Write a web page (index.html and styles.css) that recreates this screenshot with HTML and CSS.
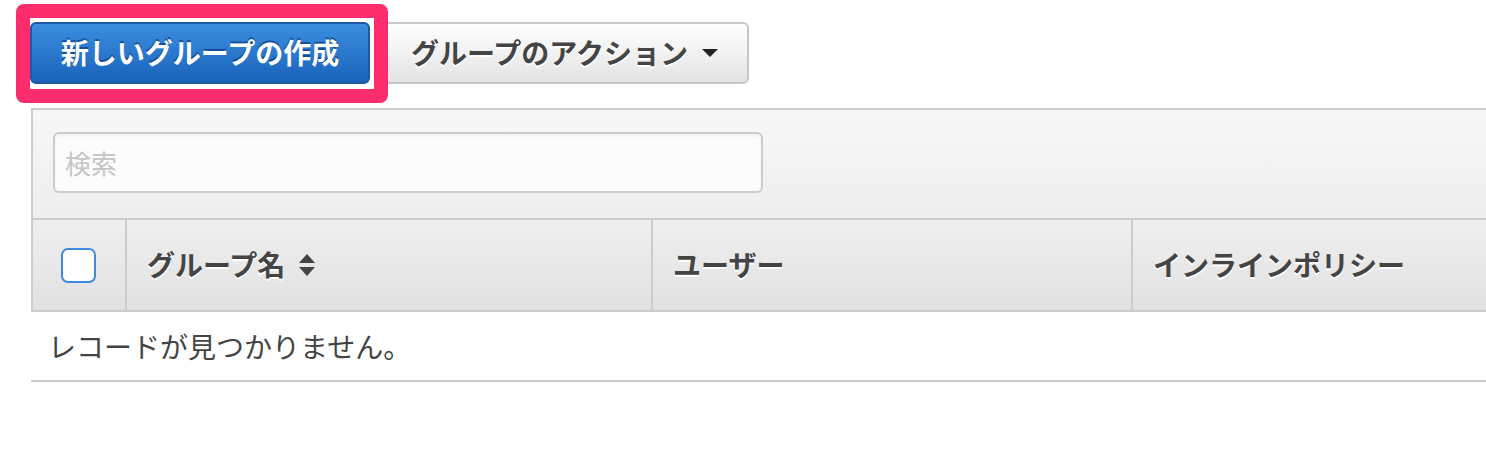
FILE: index.html
```html
<!DOCTYPE html>
<html lang="ja">
<head>
<meta charset="utf-8">
<title>グループ</title>
<link rel="stylesheet" href="styles.css">
</head>
<body>
<div class="page">
  <div class="toolbar">
    <div class="create-wrap">
      <button class="btn btn-primary">新しいグループの作成</button>
      <div class="highlight"></div>
    </div>
    <button class="btn btn-default">グループのアクション <span class="caret"></span></button>
  </div>
  <div class="panel">
    <div class="filter">
      <input class="search" type="text" placeholder="検索">
    </div>
    <div class="thead">
      <div class="th th-check"><span class="checkbox"></span></div>
      <div class="th th-name">グループ名 <span class="sort"><span class="up"></span><span class="down"></span></span></div>
      <div class="th th-users">ユーザー</div>
      <div class="th th-policy">インラインポリシー</div>
    </div>
    <div class="empty">レコードが見つかりません。</div>
  </div>
</div>
</body>
</html>
```
FILE: styles.css
```css
html, body {
  margin: 0;
  padding: 0;
  background: #ffffff;
  overflow: hidden;
}
body {
  font-family: "Noto Sans CJK JP", "Noto Sans", sans-serif;
  color: #444444;
}
.page {
  padding: 22px 0 0 30px;
}
.toolbar {
  display: flex;
  align-items: flex-start;
  gap: 10px;
}
.create-wrap {
  position: relative;
}
.btn {
  font-family: "Noto Sans CJK JP", "Noto Sans", sans-serif;
  font-size: 28px;
  font-weight: 700;
  height: 62px;
  border-radius: 6px;
  display: flex;
  align-items: center;
  justify-content: center;
  margin: 0;
  padding: 0 0 3px;
  cursor: pointer;
}
.btn-primary {
  width: 340px;
  color: #ffffff;
  background: linear-gradient(#3b8ee0, #1a63bb);
  border: 2px solid #1b58a8;
  text-shadow: 0 -2px 0 rgba(0, 40, 100, 0.55);
}
.btn-default {
  width: 369px;
  color: #444444;
  background: linear-gradient(#ffffff, #e3e3e3);
  border: 2px solid #c6c6c6;
  text-shadow: 0 2px 0 #ffffff;
  gap: 14px;
}
.caret {
  width: 0;
  height: 0;
  border-left: 8px solid transparent;
  border-right: 8px solid transparent;
  border-top: 8px solid #222222;
  margin-top: 3px;
}
.highlight {
  position: absolute;
  left: -14px;
  top: -18px;
  width: 344px;
  height: 71px;
  border: 14px solid #fd2d6d;
  border-radius: 8px;
  pointer-events: none;
}
.panel {
  margin-top: 24px;
  margin-left: 1px;
  margin-right: -20px;
}
.filter {
  border: 2px solid #cccccc;
  border-bottom: none;
  background: linear-gradient(#f7f7f7, #eeeeee);
  height: 110px;
  padding: 22px 20px 0;
  box-sizing: border-box;
}
.search {
  display: block;
  width: 710px;
  height: 61px;
  box-sizing: border-box;
  border: 2px solid #cccccc;
  border-radius: 6px;
  background: #fcfcfc;
  box-shadow: inset 0 2px 3px rgba(0, 0, 0, 0.05);
  padding: 0 10px;
  font-family: "Noto Sans CJK JP", "Noto Sans", sans-serif;
  font-size: 26px;
  color: #444444;
  margin: 0;
}
.search::placeholder {
  color: #c4c4c4;
}
.thead {
  display: grid;
  grid-template-columns: 92px 526px 480px 1fr;
  border: 2px solid #cccccc;
  background: linear-gradient(#efefef, #e1e1e1);
  height: 94px;
  box-sizing: border-box;
}
.th {
  display: flex;
  align-items: center;
  font-size: 28px;
  font-weight: 700;
  color: #444444;
  text-shadow: 0 2px 0 #ffffff;
  border-left: 2px solid #cccccc;
  padding-left: 20px;
  padding-bottom: 2px;
}
.th-check {
  border-left: none;
  padding-left: 28px;
  padding-bottom: 0;
}
.checkbox {
  display: block;
  width: 35px;
  height: 35px;
  box-sizing: border-box;
  border: 2px solid #3c8be0;
  border-radius: 7px;
  background: #ffffff;
}
.sort {
  display: inline-flex;
  flex-direction: column;
  gap: 4px;
  margin-left: 14px;
  margin-top: 2px;
}
.sort .up {
  width: 0;
  height: 0;
  border-left: 8px solid transparent;
  border-right: 8px solid transparent;
  border-bottom: 9px solid #444444;
}
.sort .down {
  width: 0;
  height: 0;
  border-left: 8px solid transparent;
  border-right: 8px solid transparent;
  border-top: 9px solid #444444;
}
.empty {
  height: 70px;
  box-sizing: border-box;
  border-bottom: 2px solid #cccccc;
  display: flex;
  align-items: center;
  padding-left: 17px;
  font-size: 28px;
  color: #444444;
}
```
